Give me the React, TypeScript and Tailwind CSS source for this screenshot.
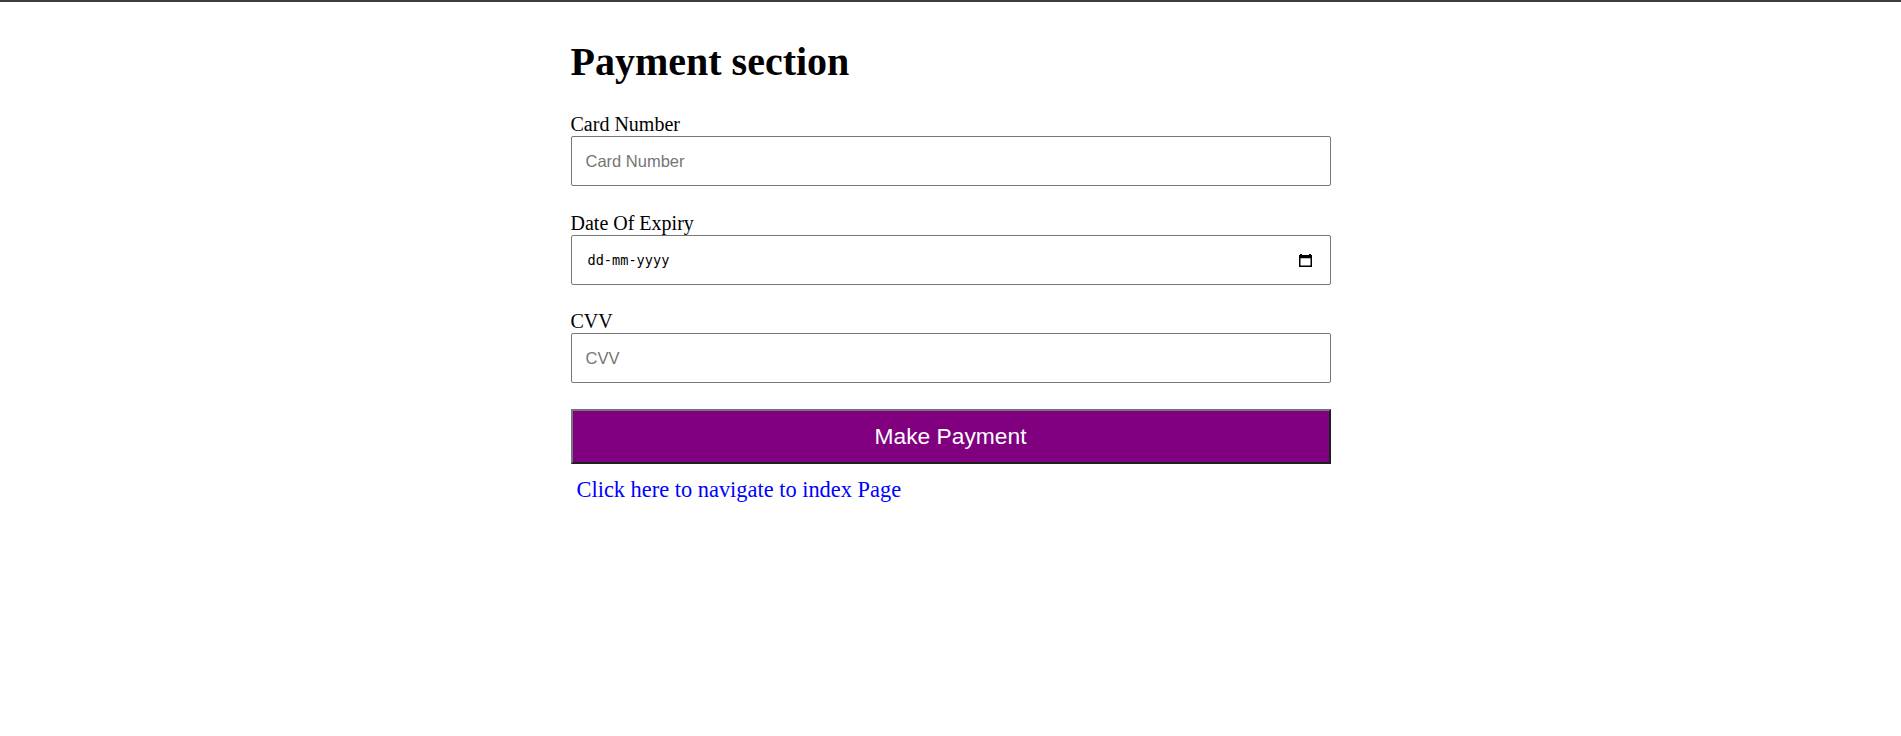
import { useState } from 'react';

function CalendarIcon() {
  return (
    <svg width="14" height="15" viewBox="0 0 14 15" className="block">
      <rect x="1" y="2" width="2" height="2" fill="#000" />
      <rect x="10" y="2" width="2" height="2" fill="#000" />
      <rect x="0.75" y="3.75" width="11.5" height="10.5" fill="none" stroke="#000" strokeWidth="1.5" />
      <rect x="0.75" y="3.75" width="11.5" height="2.5" fill="#000" />
    </svg>
  );
}

export default function App() {
  const [cardNumber, setCardNumber] = useState('');
  const [expiry, setExpiry] = useState('');
  const [cvv, setCvv] = useState('');

  const inputClass =
    'block w-full h-[50px] border border-[#767676] rounded-[2px] bg-white pl-[14px] pr-3 text-[16.5px] text-black placeholder:text-[#757575] outline-none font-["Liberation_Sans",Arial,sans-serif]';

  return (
    <div className="min-h-[736px] bg-white border-t-2 border-[#3d3d3d] font-['Liberation_Serif','Times_New_Roman',serif] text-black">
      <div className="w-[760px] mx-auto pt-[38px]">
        <h1 className="text-[40px] leading-[44px] font-bold">Payment section</h1>
        <form className="mt-[29px]" onSubmit={(e) => e.preventDefault()}>
          <label className="block text-[20px] leading-[23px]">Card Number</label>
          <input
            className={inputClass + ' mb-[25.5px]'}
            placeholder="Card Number"
            value={cardNumber}
            onChange={(e) => setCardNumber(e.target.value)}
          />

          <label className="block text-[20px] leading-[23px]">Date Of Expiry</label>
          <div className="relative mb-[25.5px]">
            <input
              className="block w-full h-[50px] border border-[#767676] rounded-[2px] bg-white pl-[16px] pr-10 text-[13.6px] text-black placeholder:text-black outline-none font-['DejaVu_Sans_Mono',monospace]"
              placeholder="dd-mm-yyyy"
              value={expiry}
              onChange={(e) => setExpiry(e.target.value)}
            />
            <div className="absolute right-[18px] top-[17px]">
              <CalendarIcon />
            </div>
          </div>

          <label className="block text-[20px] leading-[23px]">CVV</label>
          <input
            className={inputClass + ' mb-[26px]'}
            placeholder="CVV"
            value={cvv}
            onChange={(e) => setCvv(e.target.value)}
          />

          <button
            type="submit"
            className="block w-full py-[13px] bg-[#800080] text-white text-[22.8px] leading-[25px] border-2 border-t-[#767676] border-l-[#767676] border-b-[#1f1f1f] border-r-[#1f1f1f] font-['Liberation_Sans',Arial,sans-serif]"
          >
            Make Payment
          </button>
        </form>
        <a href="#" className="inline-block mt-[13px] ml-[6px] text-[22.4px] leading-[26px] text-[#0000ff]">
          Click here to navigate to index Page
        </a>
      </div>
    </div>
  );
}
